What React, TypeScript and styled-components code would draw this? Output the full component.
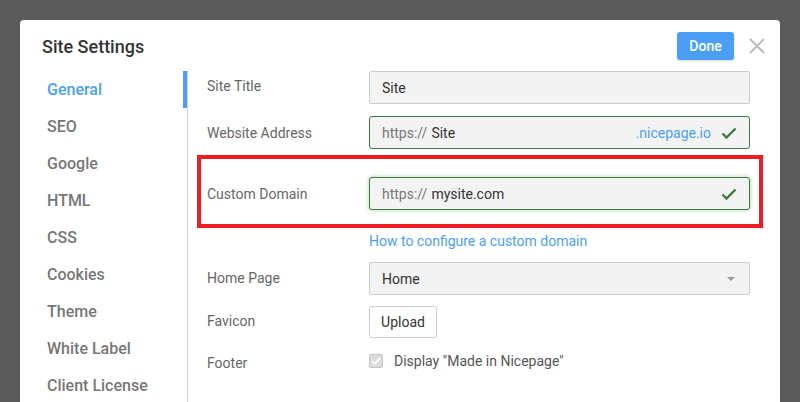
import React from "react";
import styled, { createGlobalStyle } from "styled-components";

const Global = createGlobalStyle`
  html, body { margin: 0; padding: 0; }
  body {
    background: #5a5a5a;
    font-family: Roboto, "Liberation Sans", Arial, sans-serif;
    width: 800px;
    height: 402px;
    overflow: hidden;
  }
`;

const Page = styled.div`
  padding: 20px 20px 0 20px;
  height: 402px;
  box-sizing: border-box;
  overflow: hidden;
`;

const Dialog = styled.div`
  background: #fff;
  border-radius: 4px 4px 0 0;
  height: 400px;
  display: flex;
  flex-direction: column;
`;

const Header = styled.div`
  height: 51px;
  display: flex;
  align-items: center;
  padding: 0 15px 0 22px;
  box-sizing: border-box;
`;

const Title = styled.h1`
  margin: 0;
  flex: 1;
  font-size: 18px;
  font-weight: 500;
  color: #333;
  padding-top: 1px;
`;

const DoneButton = styled.button`
  height: 28px;
  width: 57px;
  border: none;
  border-radius: 3px;
  background: #4a9ff5;
  color: #fff;
  font-family: inherit;
  font-size: 14px;
  font-weight: 500;
  box-shadow: 0 1px 2px rgba(0, 0, 0, 0.15);
  padding: 0;
`;

const CloseButton = styled.button`
  width: 16px;
  height: 28px;
  margin-left: 15px;
  border: none;
  background: transparent;
  padding: 0;
  display: flex;
  align-items: center;
  justify-content: center;
`;

const Body = styled.div`
  flex: 1;
  display: flex;
`;

const Sidebar = styled.nav`
  width: 167px;
  border-right: 1px solid #d2d2d2;
  display: flex;
  flex-direction: column;
`;

const NavItem = styled.div<{ $active?: boolean }>`
  height: 37px;
  display: flex;
  align-items: center;
  padding-left: 27px;
  font-size: 16px;
  font-weight: 500;
  color: ${(p) => (p.$active ? "#4a9ff5" : "#777")};
  box-shadow: ${(p) => (p.$active ? "inset -4px 0 0 #4a9ff5" : "none")};
`;

const Content = styled.div`
  flex: 1;
  padding: 0 30px 0 19px;
  display: flex;
  flex-direction: column;
`;

const Row = styled.div<{ $mt?: number }>`
  display: flex;
  align-items: center;
  margin-top: ${(p) => p.$mt ?? 0}px;
`;

/* $shift nudges the label text up (negative) or down (positive) inside a centred row */
const Label = styled.div<{ $shift?: number }>`
  width: 162px;
  flex: none;
  font-size: 14px;
  color: #666;
  padding-top: ${(p) => Math.max(0, (p.$shift ?? 0) * 2)}px;
  padding-bottom: ${(p) => Math.max(0, -(p.$shift ?? 0) * 2)}px;
`;

const Highlight = styled.div`
  margin: 6px -13px 0 -10px;
  padding: 18px 9px 14px 6px;
  border: 4px solid #ee1c25;
`;

const Field = styled.div<{ $valid?: boolean; $glow?: boolean }>`
  flex: 1;
  height: 33px;
  box-sizing: border-box;
  display: flex;
  align-items: center;
  padding: 0 12px;
  background: #f3f3f3;
  border: 1px solid ${(p) => (p.$valid ? "#3d7a3d" : "#cbcbcb")};
  border-radius: ${(p) => (p.$valid ? 3 : 2)}px;
  box-shadow: ${(p) => (p.$glow ? "0 0 4px rgba(90, 170, 90, 0.55)" : "none")};
  font-size: 14px;
  color: #333;
`;

const Prefix = styled.span`
  color: #777;
  margin-right: 4px;
`;

const Value = styled.span`
  flex: 1;
  color: #333;
`;

const Suffix = styled.span`
  color: #4a9ff5;
  margin-right: 10px;
`;

const HelpLink = styled.a`
  margin: 3px 0 0 162px;
  font-size: 14px;
  line-height: 20px;
  color: #4a9ff5;
  text-decoration: none;
`;

const Caret = styled.span`
  width: 0;
  height: 0;
  border-left: 4px solid transparent;
  border-right: 4px solid transparent;
  border-top: 4px solid #999;
  margin-right: 2px;
`;

const UploadButton = styled.button`
  height: 32px;
  width: 68px;
  border: 1px solid #cbcbcb;
  border-radius: 3px;
  background: #fff;
  font-family: inherit;
  font-size: 14px;
  color: #333;
  padding: 0;
`;

const CheckLabel = styled.label`
  display: flex;
  align-items: center;
  gap: 11px;
  font-size: 14px;
  color: #555;
`;

const CheckIcon = () => (
  <svg width="16" height="14" viewBox="0 0 16 14" fill="none">
    <path d="M1.5 7.5 L5.5 11.5 L14.5 2.5" stroke="#3d7a3d" strokeWidth="2.4" />
  </svg>
);

const CloseIcon = () => (
  <svg width="16" height="16" viewBox="0 0 16 16">
    <path d="M1 1 L15 15 M15 1 L1 15" stroke="#bdbdbd" strokeWidth="2" />
  </svg>
);

const CheckBoxIcon = () => (
  <svg width="14" height="14" viewBox="0 0 14 14">
    <rect x="0.5" y="0.5" width="13" height="13" rx="1.5" fill="#dcdcdc" stroke="#c4c4c4" />
    <path d="M3 7.2 L5.8 10 L11 3.8" stroke="#fff" strokeWidth="1.8" fill="none" />
  </svg>
);

const navItems = [
  "General",
  "SEO",
  "Google",
  "HTML",
  "CSS",
  "Cookies",
  "Theme",
  "White Label",
  "Client License",
];

export default function App() {
  return (
    <>
      <Global />
      <Page>
        <Dialog>
          <Header>
            <Title>Site Settings</Title>
            <DoneButton>Done</DoneButton>
            <CloseButton aria-label="Close">
              <CloseIcon />
            </CloseButton>
          </Header>
          <Body>
            <Sidebar>
              {navItems.map((n, i) => (
                <NavItem key={n} $active={i === 0}>
                  {n}
                </NavItem>
              ))}
            </Sidebar>
            <Content>
              <Row>
                <Label $shift={-2}>Site Title</Label>
                <Field>
                  <Value>Site</Value>
                </Field>
              </Row>
              <Row $mt={12}>
                <Label>Website Address</Label>
                <Field $valid>
                  <Prefix>https://</Prefix>
                  <Value>Site</Value>
                  <Suffix>.nicepage.io</Suffix>
                  <CheckIcon />
                </Field>
              </Row>
              <Highlight>
                <Row>
                  <Label>Custom Domain</Label>
                  <Field $valid $glow>
                    <Prefix>https://</Prefix>
                    <Value>mysite.com</Value>
                    <CheckIcon />
                  </Field>
                </Row>
              </Highlight>
              <HelpLink href="#">How to configure a custom domain</HelpLink>
              <Row $mt={11}>
                <Label $shift={-1}>Home Page</Label>
                <Field>
                  <Value>Home</Value>
                  <Caret />
                </Field>
              </Row>
              <Row $mt={11}>
                <Label $shift={-1}>Favicon</Label>
                <UploadButton>Upload</UploadButton>
              </Row>
              <Row $mt={13}>
                <Label $shift={2}>Footer</Label>
                <CheckLabel>
                  <CheckBoxIcon />
                  Display "Made in Nicepage"
                </CheckLabel>
              </Row>
            </Content>
          </Body>
        </Dialog>
      </Page>
    </>
  );
}
